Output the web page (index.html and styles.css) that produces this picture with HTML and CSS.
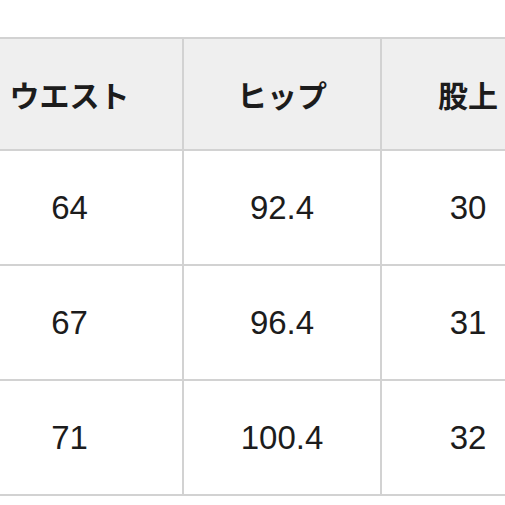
FILE: index.html
```html
<!DOCTYPE html>
<html lang="ja">
<head>
<meta charset="utf-8">
<title>サイズ表</title>
<link rel="stylesheet" href="styles.css">
</head>
<body>
<div class="page">
  <div class="table">
    <div class="cell head">ウエスト</div>
    <div class="cell head">ヒップ</div>
    <div class="cell head">股上</div>
    <div class="cell num">64</div>
    <div class="cell num">92.4</div>
    <div class="cell num">30</div>
    <div class="cell num">67</div>
    <div class="cell num">96.4</div>
    <div class="cell num">31</div>
    <div class="cell num">71</div>
    <div class="cell num">100.4</div>
    <div class="cell num">32</div>
  </div>
</div>
</body>
</html>
```
FILE: styles.css
```css
html, body {
  margin: 0;
  padding: 0;
  background: #ffffff;
  overflow: hidden;
}
.page {
  width: 505px;
  height: 505px;
  overflow: hidden;
  padding-top: 37px;
  box-sizing: border-box;
}
.table {
  display: grid;
  grid-template-columns: 225px 196px 172px;
  grid-template-rows: 110px 113px 113px 113px;
  gap: 2px;
  padding: 2px;
  background: #d2d2d2;
  width: max-content;
  margin-left: -45px;
}
.cell {
  display: flex;
  align-items: center;
  justify-content: center;
  background: #ffffff;
  color: #1c1c1c;
}
.head {
  background: #efefef;
  font-family: "Noto Sans CJK JP", "Noto Sans", sans-serif;
  font-weight: 700;
  font-size: 30px;
}
.num {
  font-family: "Liberation Sans", Arial, sans-serif;
  font-size: 33px;
}
```
